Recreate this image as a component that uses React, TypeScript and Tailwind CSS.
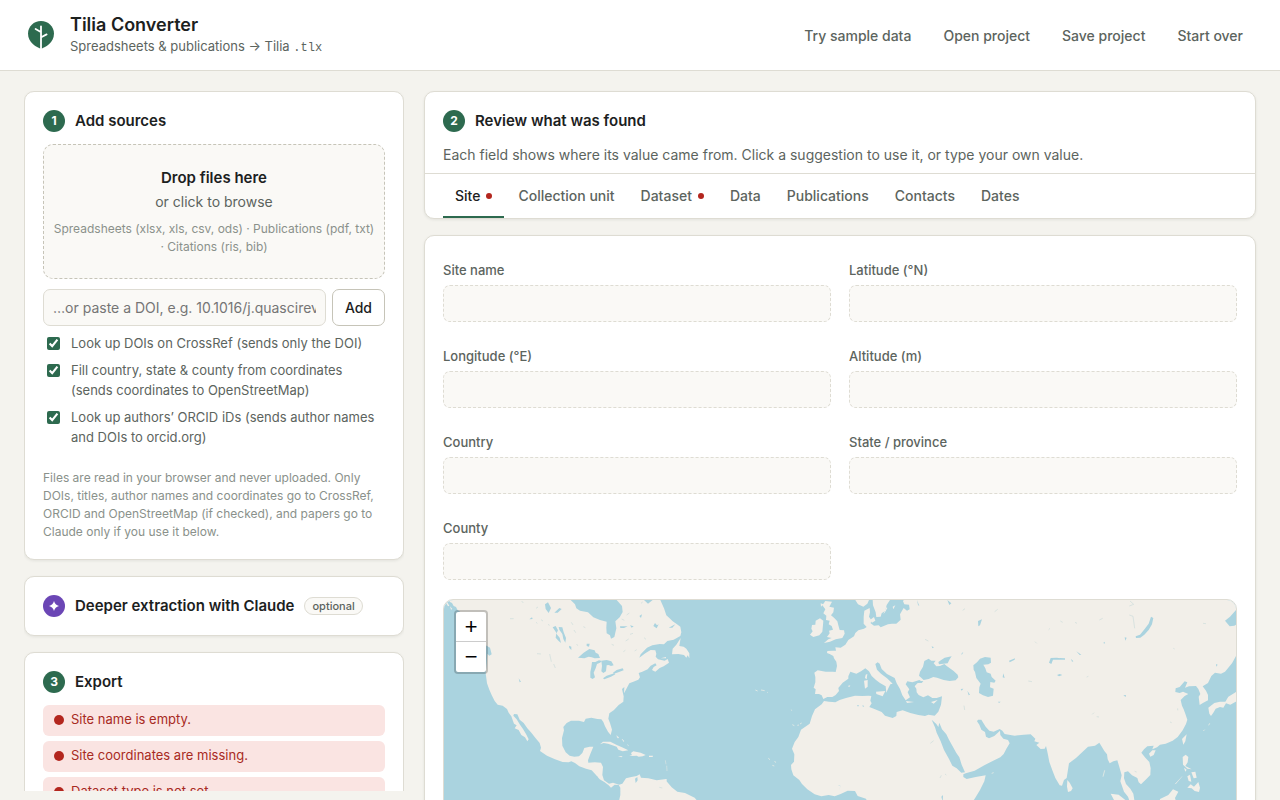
/**
 * Tilia Converter: main workspace (sources, review, export)
 */

import React, { useState } from 'react';

const headerActions = ['Try sample data', 'Open project', 'Save project', 'Start over'];

const lookups = [
  'Look up DOIs on CrossRef (sends only the DOI)',
  'Fill country, state & county from coordinates (sends coordinates to OpenStreetMap)',
  'Look up authors’ ORCID iDs (sends author names and DOIs to orcid.org)',
];

const problems = [
  'Site name is empty.',
  'Site coordinates are missing.',
  'Dataset type is not set.',
];

const tabs = [
  { name: 'Site', alert: true },
  { name: 'Collection unit', alert: false },
  { name: 'Dataset', alert: true },
  { name: 'Data', alert: false },
  { name: 'Publications', alert: false },
  { name: 'Contacts', alert: false },
  { name: 'Dates', alert: false },
];

const siteFields = [
  { id: 'site-name', label: 'Site name' },
  { id: 'latitude', label: 'Latitude (°N)' },
  { id: 'longitude', label: 'Longitude (°E)' },
  { id: 'altitude', label: 'Altitude (m)' },
  { id: 'country', label: 'Country' },
  { id: 'state', label: 'State / province' },
  { id: 'county', label: 'County' },
];

const Logo: React.FC = () => (
  <svg className="size-[34px] shrink-0" viewBox="0 0 34 34" fill="none" aria-hidden="true">
    <path
      d="M17 31C12.500 29.200 4 25 4 15.600C4 8.500 9.800 3 17 3C24.200 3 30 8.500 30 15.600C30 25 21.500 29.200 17 31Z"
      fill="#2d6a4f"
    />
    <path d="M17 31V8.300M16.800 14L11.600 11M17.200 19.200L22.600 16.400" stroke="#fff" strokeWidth="1.800" strokeLinecap="round" />
  </svg>
);

const Card: React.FC<{ className?: string; children: React.ReactNode }> = ({ className = '', children }) => (
  <section className={`rounded-[10px] border border-[#dedcd3] bg-white shadow-[0_1px_3px_rgba(30,35,30,0.08)] ${className}`}>
    {children}
  </section>
);

const StepTitle: React.FC<{ step: React.ReactNode; purple?: boolean; children: React.ReactNode }> = ({ step, purple, children }) => (
  <div className="flex items-center gap-2.5">
    <span
      className={`flex size-[22px] shrink-0 items-center justify-center rounded-full text-xs font-bold text-white ${
        purple ? 'bg-[#6b46b5]' : 'bg-[#2d6a4f]'
      }`}
    >
      {step}
    </span>
    <h2 className="text-[15px] leading-[22px] font-semibold">{children}</h2>
  </div>
);

/* Carte du monde simplifiée */
const WorldMap: React.FC = () => (
  <svg className="block h-[318px] w-full" viewBox="12 15 2376 954" preserveAspectRatio="xMidYMin slice" aria-label="World map" role="img">
    <rect x="-2000" y="0" width="7000" height="1200" fill="#aad3df" />
    <g fill="#f2efe9">
      {/* Americas */}
      <path d="M26 15L30 21L36 24L41 33L48 36L52 44L62 52L80 80L110 120L136 150L150 158L155 178L148 182L142 176L140 205L137 235L141 265L148 284L156 302L164 318L173 329L188 332L201 342L206 353L214 364L219 378L222 386L230 391L224 400L236 405L244 420L255 427L262 439L266 433L258 417L249 402L240 389L230 373L220 362L222 357L232 358L239 374L251 384L262 400L274 413L287 430L299 444L303 458L300 468L321 482L345 493L368 501L386 502L394 499L405 504L418 514L438 521L455 526L466 538L479 553L493 561L505 570L513 578L524 569L536 570L541 578L541 600L532 640L520 700L560 820L600 969L1000 969L1010 760L930 690L820 650L780 628L764 608L735 594L712 590L695 577L679 558L679 552L650 556L625 550L603 548L599 538L590 543L574 546L558 550L547 566L537 569L519 563L507 566L492 556L487 540L489 516L483 503L464 502L445 503L444 496L451 477L460 455L449 455L433 459L427 474L417 484L403 485L389 482L377 472L367 452L366 429L372 406L370 396L380 384L393 377L417 377L432 381L437 371L454 368L472 372L484 373L490 381L495 394L504 410L512 420L516 404L510 384L505 371L508 355L522 345L536 330L550 320L551 304L546 282L553 276L552 295L557 286L568 265L580 260L595 254L600 247L596 234L607 230L623 223L632 212L646 205L650 211L641 216L636 225L646 230L659 219L671 214L687 203L683 192L674 197L654 193L647 185L649 176L646 166L632 165L617 174L598 188L602 178L621 158L637 151L659 147L672 148L682 138L701 134L721 123L724 112L721 95L711 88L698 79L688 69L679 61L672 40L661 15L638 15L624 26L612 15L530 15L546 33L548 51L539 67L526 79L529 100L523 126L513 131L510 121L500 115L499 98L500 80L480 75L460 67L444 52L420 47L409 40L405 28L392 15Z" />
      <path d="M16 20L22 22L28 32L24 34Z M30 34L37 42L33 44Z" />
      <path d="M722 129L709 149L698 161L696 178L715 177L732 180L739 188L743 181L748 190L748 175L739 161L731 155L718 153Z" />
      <path d="M662 190L678 186L678 190Z" />
      <path d="M480 448L489 440L511 440L532 451L546 457L565 466L548 469L535 464L530 455L504 446L491 444Z" />
      <path d="M568 481L576 481L573 474L580 469L602 473L617 480L608 484L596 485L590 482L574 483Z" />
      <path d="M534 483L548 484L544 487Z M627 482L639 482L638 486L627 486Z M674 556L680 552L679 560Z" />
      <path d="M530 422L537 428L533 429Z M546 432L552 438L551 440Z M562 449L566 452Z" stroke="#f2efe9" />
      <path d="M676 496L678 508M680 512L681 528" stroke="#d9e4e2" strokeWidth="2" />

      {/* Europe, Asia and Africa */}
      <path d="M1145 301L1137 297L1125 297L1127 283L1121 278L1126 262L1126 246L1123 233L1133 226L1157 230L1178 230L1187 231L1191 213L1189 200L1182 190L1180 183L1169 177L1161 174L1162 168L1178 167L1188 167L1186 157L1202 158L1216 149L1225 135L1242 124L1246 114L1255 106L1272 101L1280 96L1271 86L1271 65L1273 47L1289 39L1290 52L1287 65L1294 76L1292 85L1302 92L1316 91L1322 97L1344 88L1356 86L1369 86L1382 74L1380 58L1386 47L1391 39L1401 47L1409 43L1407 29L1393 28L1389 19L1391 15L2520 -15L2420 15L2388 45L2370 65L2355 77L2369 94L2383 92L2390 88L2440 110L2430 140L2388 183L2376 205L2355 230L2343 236L2325 233L2314 243L2304 264L2288 274L2298 287L2304 300L2304 316L2290 323L2279 330L2276 305L2281 297L2275 282L2268 273L2247 274L2235 278L2242 262L2234 259L2219 276L2207 280L2206 291L2219 294L2229 290L2245 297L2234 303L2222 315L2226 332L2231 343L2237 359L2242 374L2238 387L2228 406L2213 426L2198 437L2177 446L2160 449L2151 457L2137 463L2141 452L2122 454L2112 463L2104 473L2116 488L2128 501L2132 520L2131 540L2120 551L2103 568L2096 562L2092 549L2076 541L2064 529L2053 532L2052 550L2058 567L2071 581L2080 596L2083 615L2100 660L2080 650L2064 605L2052 590L2045 570L2041 559L2045 541L2038 516L2032 496L2020 499L2009 505L2003 493L2001 478L1993 468L1984 453L1978 443L1965 452L1944 455L1924 474L1908 489L1887 505L1883 530L1880 549L1872 555L1866 572L1859 571L1846 549L1837 526L1828 501L1824 480L1821 466L1818 453L1814 461L1802 462L1789 450L1798 443L1783 439L1786 431L1772 418L1751 419L1724 422L1694 417L1687 407L1679 402L1661 410L1648 407L1637 395L1624 374L1614 374L1611 379L1618 389L1624 404L1635 411L1638 425L1647 430L1663 423L1680 407L1681 420L1690 431L1704 435L1709 445L1700 460L1691 477L1681 487L1652 501L1633 511L1604 527L1577 535L1570 538L1570 546L1580 552L1607 546L1637 541L1633 559L1620 585L1605 610L1550 690L1510 780L1480 969L1270 969L1270 730L1290 640L1278 611L1253 603L1245 588L1223 587L1202 597L1184 604L1166 600L1144 604L1124 598L1102 583L1086 567L1078 555L1060 541L1054 523L1053 510L1062 500L1063 478L1056 461L1064 441L1075 426L1083 404L1109 386L1116 363L1125 343L1145 328L1152 318L1167 320L1186 322L1199 315L1218 309L1245 302L1267 303L1286 302L1294 303L1291 317L1295 325L1288 336L1305 343L1325 351L1335 362L1358 369L1369 363L1370 351L1388 346L1411 354L1435 360L1455 363L1465 359L1484 362L1495 350L1503 329L1506 304L1490 309L1477 309L1464 301L1450 307L1436 300L1430 292L1429 281L1424 274L1432 265L1448 261L1438 255L1417 262L1402 259L1397 268L1408 283L1403 292L1410 307L1397 316L1387 301L1380 282L1370 265L1364 249L1341 237L1325 222L1319 206L1313 202L1306 207L1311 224L1323 236L1341 250L1358 266L1351 268L1345 280L1339 293L1337 274L1320 264L1308 255L1295 243L1287 229L1276 220L1263 229L1249 236L1231 230L1225 244L1225 251L1208 263L1195 279L1197 288L1187 300L1177 306L1162 306L1150 312Z" />
      {/* Scandinavia */}
      <path d="M1246 15L1254 28L1270 35L1282 26L1287 15Z M1298 15L1299 31L1307 52L1309 66L1322 65L1325 55L1336 47L1340 30L1350 15Z" />
      <path d="M1290 75L1302 66L1306 77L1296 83Z M1330 57L1339 37L1342 39L1335 52Z M1358 35L1366 31L1360 43Z" />
      {/* British Isles */}
      <path d="M1147 31L1156 18L1176 20L1168 35L1182 38L1180 52L1173 61L1182 68L1192 79L1195 91L1199 105L1212 106L1214 116L1207 129L1187 133L1170 140L1152 144L1165 133L1175 129L1161 126L1169 115L1167 107L1179 104L1175 93L1166 88L1169 77L1158 75L1159 62L1150 55L1156 43Z" />
      <path d="M1127 77L1140 70L1150 77L1149 90L1147 110L1138 121L1120 126L1110 119L1118 109L1114 101L1116 90L1126 89Z M1142 25L1150 28L1143 35Z" />
      {/* Mediterranean islands */}
      <path d="M1272 257L1283 255L1283 275L1275 281Z M1277 239L1282 237L1280 253L1275 249Z M1308 290L1336 288L1328 304L1309 297Z M1223 273L1231 271L1228 276Z M1398 318L1422 321L1401 324Z M1473 321L1493 315L1481 326Z" />
      {/* East Asia and the Indian Ocean */}
      <path d="M1882 555L1889 563L1898 580L1893 588L1884 591L1881 575Z" />
      <path d="M2127 476L2137 466L2147 466L2141 480L2131 485Z M2226 432L2240 418L2236 439L2230 449Z" />
      <path d="M2305 338L2323 324L2340 320L2356 320L2365 305L2388 291L2420 270L2420 320L2387 320L2371 329L2358 325L2350 338L2340 336L2327 341L2320 353L2313 363L2308 356Z" />
      <path d="M2228 486L2237 479L2245 486L2243 502L2236 513L2255 523L2242 521L2229 509Z M2232 518L2240 524L2236 530Z M2254 532L2266 530L2270 548L2261 550Z M2242 544L2250 539L2254 560L2246 558Z M2242 578L2252 568L2262 575L2275 561L2280 578L2277 591L2264 588L2255 580Z M2204 568L2225 545L2228 543L2208 566Z" />
      <path d="M2012 596L2036 599L2056 615L2100 660L2120 740L2080 720L2030 630Z M2160 612L2185 600L2199 583L2215 590L2205 609L2220 660L2190 720L2150 700Z M2350 700L2240 720L2270 640L2330 660Z" />
      <path d="M1989 545L1994 526M1655 535L1661 533M2290 408L2294 404M2309 385L2306 391" stroke="#dce7e4" strokeWidth="3" />
      {/* Atlantic islands */}
      <path d="M946 285L953 288M963 285L974 287M982 292L984 293M1057 389L1063 392M1072 391L1077 390M1080 387L1085 384M985 490L990 494M997 511L1003 513M1004 498L1007 503M1054 344L1055 347" stroke="#dce7e4" strokeWidth="3" />
    </g>

    <g fill="#aad3df">
      {/* Great Lakes */}
      <path d="M414 188L431 173L448 162L464 166L467 173L475 177L480 189L464 190L455 187L446 185L433 190Z" />
      <path d="M456 201L466 201L477 196L486 198L480 203L471 207L467 220L461 233L465 247L458 252L451 248L451 231L454 216Z" />
      <path d="M484 197L500 195L514 199L521 211L513 213L506 210L500 211L498 229L490 234L484 229L486 213Z" />
      <path d="M489 250L500 242L523 235L526 238L513 245L493 253Z M519 233L530 225L548 220L551 226L535 232L522 236Z" />
      {/* Canadian lakes */}
      <path d="M338 97L347 93L354 106L349 116L359 128L363 144L356 138L347 128L349 113Z M356 96L367 97L371 112L378 129L376 143L370 132L367 117L358 104Z M315 28L324 22L333 39L326 54L317 42Z M343 53L358 39L365 42L353 53Z M268 73L276 67L278 72Z M387 152L394 155L394 165L388 159Z M440 146L449 146L447 155L440 153Z M540 94L563 94L552 99L541 99Z M570 91L581 94L575 98Z M598 63L606 58L603 69Z M640 93L645 84L651 91L656 88L650 100Z M686 98L706 88L697 98Z M517 60L520 51L526 58L522 66Z" />
      {/* Black Sea and Azov */}
      <path d="M1437 242L1440 230L1449 215L1453 198L1466 191L1474 197L1487 197L1481 205L1489 214L1500 213L1513 207L1521 214L1540 227L1553 239L1555 247L1547 256L1529 258L1511 255L1491 248L1480 246L1466 252L1451 255Z" />
      <path d="M1497 208L1495 201L1507 193L1514 188L1535 184L1529 193L1523 205Z M1433 259L1450 258L1445 264L1433 263Z" />
      {/* Caspian Sea */}
      <path d="M1600 211L1611 202L1620 191L1635 186L1652 188L1653 203L1645 208L1630 209L1636 220L1640 232L1652 236L1655 246L1667 257L1663 263L1651 261L1650 277L1661 281L1659 302L1644 306L1629 301L1617 294L1618 277L1622 266L1609 249L1605 231L1601 224Z" />
      {/* Red Sea */}
      <path d="M1475 374L1489 387L1495 396L1498 383L1506 403L1519 418L1527 434L1537 452L1549 474L1558 487L1565 509L1575 532L1564 533L1550 520L1537 512L1527 492L1512 465L1502 439L1490 413L1485 397Z" />
      {/* Inland lakes of Asia */}
      <path d="M2087 124L2100 119L2114 102L2126 86L2133 65L2140 69L2136 88L2126 105L2113 119L2101 128L2088 129Z M1827 203L1832 189L1850 188L1875 191L1875 194L1839 194L1834 207Z M1851 240L1859 237L1867 240L1857 244Z M1707 197L1725 190L1724 194L1709 202Z M1700 199L1699 219M1690 235L1694 249L1688 247Z M1614 78L1626 73L1620 91L1615 94Z M1990 143L1995 140L1993 147Z M1909 169L1924 179L1919 180Z M1893 191L1900 199L1896 200Z M2050 301L2058 300L2057 306Z M2328 207L2333 209L2329 215Z M2054 127L2060 128L2056 137Z M1674 320L1682 320L1677 324Z M1475 154L1482 157L1477 160Z M1522 15L1534 25L1528 30Z M1431 15L1438 33L1434 30Z M1562 282L1570 281L1565 287Z M1582 287L1590 299L1586 301Z M1585 262L1589 266Z M1565 175L1570 171L1565 181Z M1504 605L1509 600L1508 620Z M1860 189L1875 190L1875 194L1860 194Z" />
      <path d="M585 551L592 546L593 556L587 564Z M463 540L473 545L472 551Z M236 250L243 260L239 262Z M1251 330L1257 331L1254 335Z M1267 331L1273 333L1269 336Z M1193 571L1201 574L1198 588L1201 572Z" />
    </g>
    <g stroke="#cbdcdb" strokeWidth="2" fill="none">
      <path d="M210 71H221M245 18L250 24M288 40L294 36M288 82L292 85M325 87L328 92M303 74L309 78M394 82L399 90M402 105L407 113M430 95L436 98M515 148L522 151M557 138L566 132M570 118L579 115M612 128L618 133M550 170L556 166M584 168L590 164M545 72L553 76M560 60L568 54M603 25L608 21M410 147L413 152M291 176L303 177M329 177L334 200M341 207L346 219M658 577L667 579" />
      <path d="M1455 133L1465 138M1568 46L1575 41M1664 50L1673 43M1826 104L1830 100M1861 78L1868 82M1905 82L1911 85M1785 140L1790 145M1765 258L1776 260M2070 18L2081 28L2068 33M2068 60L2079 64L2084 100M1978 75L1988 70M1940 246L1945 244M1957 358L1962 353M1970 365L1977 366M2200 160L2204 162M2289 85L2298 86M2213 340V346M2190 381L2195 383M1471 445L1481 437M1500 549L1504 541M1515 537L1519 540M2084 529L2090 531M1572 332L1574 345" />
    </g>
  </svg>
);

const App: React.FC = () => {
  const [activeTab, setActiveTab] = useState('Site');

  return (
    <div className="min-h-screen bg-[#f4f3ee] font-['Inter',sans-serif] text-sm text-[#1c211e]">
      {/* Header */}
      <header className="sticky top-0 z-10 flex items-center justify-between border-b border-[#dedcd3] bg-white px-6 py-3.5">
        <div className="flex items-center gap-3">
          <Logo />
          <div>
            <h1 className="text-lg leading-[22px] font-semibold">Tilia Converter</h1>
            <p className="text-[13px] leading-5 text-[#5c645e]">
              Spreadsheets &amp; publications → Tilia <code className="font-['Liberation_Mono',monospace] text-xs">.tlx</code>
            </p>
          </div>
        </div>
        <nav className="flex gap-1.5">
          {headerActions.map((action) => (
            <button key={action} type="button" className="rounded-lg px-[13px] pt-2.5 pb-2 leading-5 font-medium text-[#5c645e]">
              {action}
            </button>
          ))}
        </nav>
      </header>

      <main className="grid grid-cols-[380px_minmax(0,1fr)] items-start gap-5 px-6 pt-5">
        {/* Sources and export */}
        <aside className="sticky top-[91px] flex max-h-[calc(100vh-100px)] flex-col gap-4 overflow-y-auto [scrollbar-width:none]">
          <Card className="shrink-0 p-[18px]">
            <StepTitle step="1">Add sources</StepTitle>

            <button
              type="button"
              className="mt-3 block w-full rounded-[10px] border border-dashed border-[#c6c4b8] bg-[#faf9f6] px-2 pt-[21px] pb-[22px] text-center"
            >
              <span className="block text-[15px] leading-6 font-semibold">Drop files here</span>
              <span className="block leading-6 text-[#5c645e]">or click to browse</span>
              <span className="mt-1.5 block text-xs leading-[18px] text-[#8a918b]">
                Spreadsheets (xlsx, xls, csv, ods) · Publications (pdf, txt) · Citations (ris, bib)
              </span>
            </button>

            <div className="mt-2.5 flex gap-1.5">
              <input
                type="text"
                aria-label="DOI"
                placeholder="…or paste a DOI, e.g. 10.1016/j.quascirev.2020.106"
                className="h-[37px] min-w-0 flex-1 rounded-[7px] border border-[#dedcd3] bg-[#faf9f6] px-[9px] placeholder:text-[#757575]"
              />
              <button type="button" className="h-[37px] rounded-[7px] border border-[#c6c4b8] bg-white px-3 font-medium">
                Add
              </button>
            </div>

            <div className="mt-[7px] flex flex-col gap-[7px]">
              {lookups.map((text) => (
                <label key={text} className="flex items-start gap-[11px] pl-1 text-[13px] leading-5 text-[#5c645e]">
                  <input type="checkbox" defaultChecked className="mt-1 size-[13px] shrink-0 accent-[#2d6a4f]" />
                  <span>{text}</span>
                </label>
              ))}
            </div>

            <p className="mt-[22px] text-xs leading-[18px] text-[#8a918b]">
              Files are read in your browser and never uploaded. Only DOIs, titles, author names and coordinates go to
              CrossRef, ORCID and OpenStreetMap (if checked), and papers go to Claude only if you use it below.
            </p>
          </Card>

          <Card className="flex shrink-0 items-center gap-2.5 p-[18px]">
            <StepTitle
              purple
              step={
                <svg className="size-3" viewBox="0 0 12 12" fill="currentColor" aria-hidden="true">
                  <path d="M6 1Q7 5 11 6Q7 7 6 11Q5 7 1 6Q5 5 6 1Z" />
                </svg>
              }
            >
              Deeper extraction with Claude
            </StepTitle>
            <span className="rounded-full border border-[#dedcd3] bg-[#faf9f6] px-[7px] text-[11px] leading-4 font-medium text-[#5c645e]">
              optional
            </span>
          </Card>

          <Card className="shrink-0 p-[18px]">
            <StepTitle step="3">Export</StepTitle>
            <ul className="mt-3 flex flex-col gap-[5px]">
              {problems.map((problem) => (
                <li
                  key={problem}
                  className="flex items-center gap-[7px] rounded-md bg-[#fae4e2] px-[11px] pt-[5px] pb-[7px] text-[13px] leading-[19px] text-[#a82a22]"
                >
                  <span className="size-2.5 shrink-0 rounded-full bg-[#b3261e]" />
                  {problem}
                </li>
              ))}
            </ul>
          </Card>
        </aside>

        {/* Review */}
        <div className="flex flex-col gap-4 pb-6">
          <Card>
            <div className="px-[18px] pt-[18px] pb-2">
              <StepTitle step="2">Review what was found</StepTitle>
              <p className="mt-3 leading-[21px] text-[#5c645e]">
                Each field shows where its value came from. Click a suggestion to use it, or type your own value.
              </p>
            </div>
            <div role="tablist" className="flex gap-0.5 border-t border-[#dedcd3] px-[18px]">
              {tabs.map((tab) => (
                <button
                  key={tab.name}
                  type="button"
                  role="tab"
                  aria-selected={tab.name === activeTab}
                  onClick={() => setActiveTab(tab.name)}
                  className={`flex h-11 items-center gap-1.5 border-b-2 px-3 pt-0.5 font-medium ${
                    tab.name === activeTab ? 'border-[#2d6a4f] text-[#1c211e]' : 'border-transparent text-[#5c645e]'
                  }`}
                >
                  {tab.name}
                  {tab.alert && <span className="size-1.5 rounded-full bg-[#b3261e]" />}
                </button>
              ))}
            </div>
          </Card>

          <Card className="px-[18px] pt-6 pb-[18px]">
            <div className="grid grid-cols-2 gap-x-[18px] gap-y-6">
              {siteFields.map((field) => (
                <div key={field.id} className="flex flex-col gap-[5px]">
                  <label htmlFor={field.id} className="text-[13px] leading-5 font-medium text-[#5c645e]">
                    {field.label}
                  </label>
                  <input
                    id={field.id}
                    type="text"
                    className="h-[37px] w-full rounded-[7px] border border-dashed border-[#dedcd3] bg-[#faf9f6] px-[9px]"
                  />
                </div>
              ))}
            </div>

            {/* Map */}
            <div className="relative mt-[19px] overflow-hidden rounded-[10px] border border-[#dedcd3]">
              <WorldMap />
              <div className="absolute top-2.5 left-2.5 flex flex-col overflow-hidden rounded border-2 border-black/20 bg-white bg-clip-padding font-['Liberation_Mono',monospace] text-[22px] leading-[30px] text-black">
                <button type="button" aria-label="Zoom in" className="size-[30px] border-b border-[#ccc] pt-0.5 leading-[29px]">
                  +
                </button>
                <button type="button" aria-label="Zoom out" className="size-[30px] pt-0.5">
                  −
                </button>
              </div>
            </div>
          </Card>
        </div>
      </main>
    </div>
  );
};

export default App;
